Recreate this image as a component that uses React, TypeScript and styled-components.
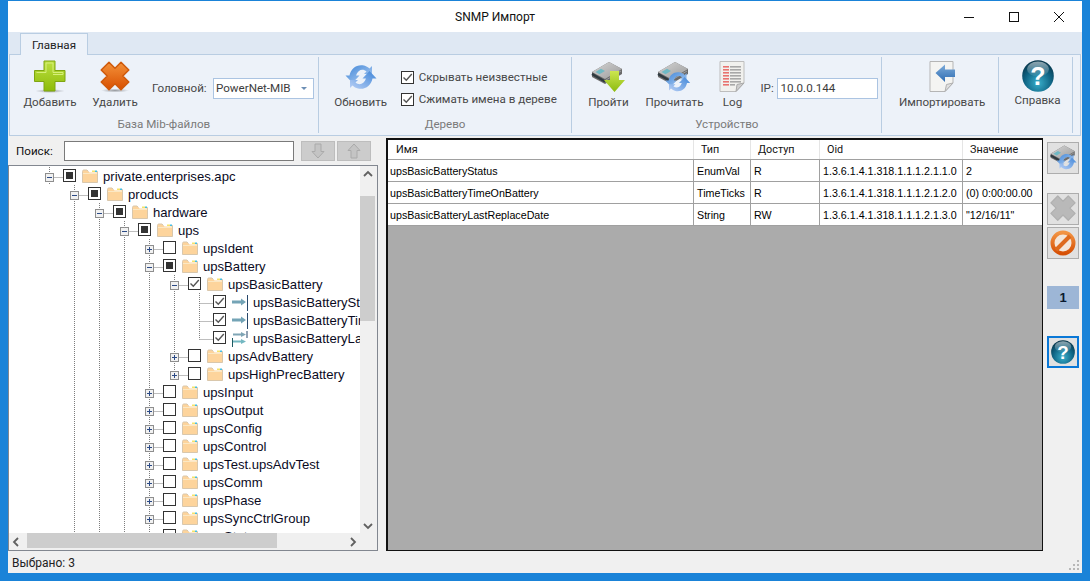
import React from "react";
import styled, { createGlobalStyle } from "styled-components";

const Global = createGlobalStyle`
  html, body { margin: 0; padding: 0; height: 581px; overflow: hidden; background: #1a83d8; }
  #root { height: 581px; }
  * { box-sizing: border-box; }
`;

const UI = `Roboto, "Noto Sans", sans-serif`;
const DATA = `"Liberation Sans", Arial, sans-serif`;

const Win = styled.div`
  margin: 1px 8px 0;
  width: 1074px;
  height: 572px;
  background: #f0f0f0;
  display: flex;
  flex-direction: column;
  font-family: ${UI};
  font-size: 11.6px;
  color: #000;
`;
const TitleBar = styled.div`
  height: 31px;
  background: #fff;
  display: flex;
  align-items: center;
`;
const Title = styled.div`
  flex: 1;
  text-align: center;
  padding-left: 36px;
  color: #111;
  font-size: 12px;
`;
const Controls = styled.div`display: flex; width: 136px;`;
const Ctl = styled.div`
  flex: 1;
  height: 29px;
  display: flex;
  align-items: center;
  justify-content: center;
`;
const TabStrip = styled.div`
  height: 22px;
  background: #dfe8f3;
  padding-left: 12px;
  display: flex;
  align-items: flex-end;
`;
const Tab = styled.div`
  width: 68px;
  height: 22px;
  margin-bottom: -1px;
  position: relative;
  z-index: 1;
  background: #edf2f9;
  border: 1px solid #b9cde2;
  border-bottom: none;
  text-align: center;
  line-height: 22px;
  color: #222;
`;
const Ribbon = styled.div`
  height: 82px;
  margin-left: 1px;
  margin-right: 1px;
  background: #edf2f9;
  border: 1px solid #b9cde2;
  display: flex;
  padding-right: 7px;
`;
const Group = styled.div<{ $w?: number }>`
  width: ${(p) => (p.$w ? `${p.$w}px` : "auto")};
  height: 76px;
  margin-top: 2px;
  border-right: 1px solid #b9cde2;
  display: flex;
  flex-direction: column;
`;
const GroupBody = styled.div<{ $pad?: number; $center?: boolean }>`
  height: 57px;
  display: flex;
  padding-left: ${(p) => p.$pad ?? 0}px;
  justify-content: ${(p) => (p.$center ? "center" : "flex-start")};
`;
const GroupName = styled.div`
  height: 19px;
  padding-top: 2px;
  text-align: center;
  color: #7a7a7a;
  line-height: 17px;
`;
const BigButton = styled.div<{ $w: number }>`
  width: ${(p) => p.$w}px;
  display: flex;
  flex-direction: column;
  align-items: center;
  padding-top: 3px;
  color: #484848;
  white-space: nowrap;
  svg { flex: none; display: block; }
`;
const BigLabel = styled.div`
  line-height: 16px;
`;
const Field = styled.div<{ $ml: number }>`
  display: flex;
  align-items: center;
  margin-left: ${(p) => p.$ml}px;
  margin-top: 20px;
  height: 22px;
  color: #484848;
  white-space: nowrap;
`;
const FieldLabel = styled.span<{ $w: number }>`
  width: ${(p) => p.$w}px;
  display: block;
`;
const BoxInput = styled.div`
  width: 101px;
  height: 21px;
  background: #fff;
  border: 1px solid #abc4e2;
  padding-left: 2px;
  display: flex;
  align-items: center;
  justify-content: space-between;
  color: #3c3c3c;
  overflow: hidden;
`;
const Caret = styled.span`
  width: 0;
  height: 0;
  margin-right: 6px;
  border-left: 3px solid transparent;
  border-right: 3px solid transparent;
  border-top: 3px solid #6d8fb5;
`;
const Checks = styled.div`
  margin-left: 4px;
  padding-top: 13px;
  display: flex;
  flex-direction: column;
  gap: 8px;
`;
const CheckLine = styled.div`
  display: flex;
  align-items: center;
  height: 14px;
  gap: 5px;
  color: #484848;
  white-space: nowrap;
`;
const Box = styled.span<{ $mt?: number }>`
  width: 13px;
  height: 13px;
  flex: none;
  margin-top: ${(p) => p.$mt ?? 0}px;
  background: #fff;
  border: 1px solid #333;
  display: flex;
  align-items: center;
  justify-content: center;
`;
const Mixed = styled.span`
  width: 7px;
  height: 7px;
  background: #333;
`;
const Main = styled.div`
  flex: 1;
  display: flex;
  min-height: 0;
`;
const LeftCol = styled.div`
  width: 370px;
  display: flex;
  flex-direction: column;
`;
const SearchRow = styled.div`
  height: 29px;
  display: flex;
  align-items: flex-start;
  padding: 5px 0 0 8px;
  color: #111;
`;
const SearchLabel = styled.div`
  width: 48px;
  line-height: 20px;
`;
const SearchInput = styled.div`
  width: 230px;
  height: 20px;
  background: #fff;
  border: 1px solid #7a7a7a;
  margin-right: 7px;
`;
const ArrowBtn = styled.div`
  width: 34px;
  height: 20px;
  margin-right: 2px;
  background: #cccccc;
  border: 1px solid #bdbdbd;
  display: flex;
  align-items: center;
  justify-content: center;
`;
const TreePanel = styled.div`
  height: 386px;
  border: 1px solid #828790;
  background: #f0f0f0;
  display: grid;
  grid-template-columns: 351px 15px;
  grid-template-rows: 1fr 15px;
  padding-bottom: 2px;
`;
const TreeView = styled.div`
  background: #fff;
  overflow: hidden;
  padding-top: 1px;
  font-family: ${DATA};
  font-size: 13.1px;
  color: #0a0a1e;
  white-space: nowrap;
`;
const Row = styled.div`
  height: 18px;
  display: flex;
  align-items: flex-start;
`;
const NodeIcon = styled.span`
  margin: 2px 5px 0 6px;
  width: 16px;
  height: 14px;
  flex: none;
  display: block;
  svg { display: block; }
`;
const NodeLabel = styled.span`
  line-height: 20px;
`;
const VBar = styled.div`
  background: #f0f0f0;
  display: flex;
  flex-direction: column;
`;
const HBar = styled.div`
  background: #f0f0f0;
  display: flex;
`;
const BarBtn = styled.div`
  width: 15px;
  height: 15px;
  flex: none;
  display: flex;
  align-items: center;
  justify-content: center;
  color: #606060;
`;
const VThumb = styled.div<{ $before: number; $size: number }>`
  margin-top: ${(p) => p.$before}px;
  height: ${(p) => p.$size}px;
  background: #cdcdcd;
`;
const Spacer = styled.div`flex: 1;`;
const HThumb = styled.div<{ $size: number }>`
  width: ${(p) => p.$size}px;
  margin-left: 3px;
  background: #cdcdcd;
`;
const Corner = styled.div`background: #f0f0f0;`;
const TablePanel = styled.div`
  width: 657px;
  height: 413px;
  margin: 2px 0 0 8px;
  background: #ababab;
  border: 1px solid #111;
  border-width: 2px 1px 1px 2px;
  overflow: hidden;
`;
const Columns = "305px 57px 69px 143px 1fr";
const HeadRow = styled.div`
  display: grid;
  grid-template-columns: ${Columns};
  height: 20px;
  background: #fff;
  border-bottom: 1px solid #a0a0a0;
`;
const HeadCell = styled.div`
  padding-left: 7px;
  line-height: 19px;
  font-size: 10.8px;
  color: #111;
  border-left: 1px solid #e5e5e5;
  &:first-child { border-left: none; padding-left: 8px; }
`;
const BodyRow = styled.div`
  display: grid;
  grid-template-columns: ${Columns};
  height: 22px;
  background: #fff;
  border-bottom: 1px solid #a0a0a0;
`;
const BodyCell = styled.div`
  padding-left: 3px;
  line-height: 22px;
  font-family: ${DATA};
  font-size: 10.7px;
  color: #000;
  white-space: nowrap;
  overflow: hidden;
  border-left: 1px solid #a0a0a0;
  &:first-child { border-left: none; padding-left: 2px; }
`;
const SideBar = styled.div`
  width: 32px;
  margin-left: 4px;
  padding-top: 6px;
  display: flex;
  flex-direction: column;
`;
const SideBtn = styled.div<{ $mt?: number; $focus?: boolean }>`
  width: 32px;
  height: 32px;
  margin-top: ${(p) => p.$mt ?? 0}px;
  background: #e1e1e1;
  border: ${(p) => (p.$focus ? "2px solid #0a78d7" : "1px solid #adadad")};
  display: flex;
  align-items: center;
  justify-content: center;
  svg { display: block; flex: none; }
`;
const Badge = styled.div`
  width: 32px;
  height: 23px;
  margin-top: 27px;
  background: #9db6d6;
  text-align: center;
  line-height: 23px;
  font-family: ${DATA};
  font-weight: bold;
  font-size: 13px;
  color: #0a1a30;
`;
const Status = styled.div`
  height: 22px;
  display: flex;
  align-items: center;
  justify-content: space-between;
  padding: 1px 2px 0 4px;
  font-size: 12px;
  color: #222;
  svg { align-self: flex-end; margin-bottom: 2px; }
`;

/* ---------- icons ---------- */
const PlusIcon = () => (
  <svg width="32" height="34" viewBox="0 0 32 34">
    <defs>
      <linearGradient id="gPlus" x1="0" y1="0" x2="0" y2="1">
        <stop offset="0" stopColor="#bce040" />
        <stop offset="1" stopColor="#8dbb0a" />
      </linearGradient>
      <radialGradient id="gShadow">
        <stop offset="0" stopColor="#000" stopOpacity=".35" />
        <stop offset="1" stopColor="#000" stopOpacity="0" />
      </radialGradient>
    </defs>
    <ellipse cx="16" cy="31" rx="15" ry="2" fill="url(#gShadow)" />
    <path d="M10 1h11v9.500h10v11h-10v9.500h-11v-9.500h-9.500v-11h9.500z" fill="url(#gPlus)" stroke="#7fa512" strokeWidth="1" strokeLinejoin="round" />
    <path d="M12 3h7v9.500h10v2h-10M12 3v9.500h-9.500" fill="none" stroke="#d6ef7a" strokeWidth="1" />
  </svg>
);
const CrossIcon = ({ gray }: { gray?: boolean }) => (
  <svg width={gray ? 28 : 32} height={gray ? 30 : 34} viewBox="0 0 32 34">
    <defs>
      <linearGradient id="gCross" x1="0" y1="0" x2="0" y2="1">
        <stop offset="0" stopColor="#f4923a" />
        <stop offset="1" stopColor="#d84f00" />
      </linearGradient>
    </defs>
    {!gray && <ellipse cx="16" cy="30.500" rx="14" ry="2" fill="url(#gShadow)" />}
    <path
      d="M16 8.200L22 2.200L29.800 10L23.800 16L29.800 22L22 29.800L16 23.800L10 29.800L2.200 22L8.200 16L2.200 10L10 2.200Z"
      fill={gray ? "#b9b9b9" : "url(#gCross)"}
      stroke={gray ? "#b0b0b0" : "#cf5a0c"}
      strokeWidth="1.500"
      strokeLinejoin="round"
    />
  </svg>
);
const RefreshShape = () => (
  <g>
    <defs>
      <linearGradient id="gRefA" x1="0" y1="0" x2="1" y2="1">
        <stop offset="0" stopColor="#3f86d8" />
        <stop offset="1" stopColor="#b4d0f3" />
      </linearGradient>
      <linearGradient id="gRefB" x1="1" y1="0" x2="0" y2="1">
        <stop offset="0" stopColor="#3f86d8" />
        <stop offset="1" stopColor="#b8cff5" />
      </linearGradient>
    </defs>
    <path d="M0.500 14.500L4.500 14.500C6 7 12 3 19 4.500C21 5 23 6 24.500 7.500L27 5L27 13L19 13L21.500 10.500C18 7.500 13 8.500 11 14.500L14.500 14.500L7.500 22Z" fill="url(#gRefA)" />
    <path d="M31.500 17.500L27.500 17.500C26 25 20 29 13 27.500C11 27 9 26 7.500 24.500L5 27L5 19L13 19L10.500 21.500C14 24.500 19 23.500 21 17.500L17.500 17.500L24.500 10Z" fill="url(#gRefB)" />
  </g>
);
const RefreshIcon = () => (
  <svg width="32" height="34" viewBox="0 -1 32 34">
    <RefreshShape />
  </svg>
);
const DeviceShape = () => (
  <g>
    <defs>
      <linearGradient id="gDev" x1="0" y1="0" x2="1" y2="1">
        <stop offset="0" stopColor="#d6d6d6" />
        <stop offset="1" stopColor="#9a9a9a" />
      </linearGradient>
    </defs>
    <path d="M1 11L18 1L31 8L31 13L14 23L1 16Z" fill="#6a6a6a" />
    <path d="M1 11L18 1L31 8L14 18Z" fill="url(#gDev)" />
    <path d="M4.500 11L10 7.800L14 10L8.500 13.200Z" fill="#6fb9c4" />
    <path d="M1 13L14 20.500" stroke="#2f3a40" strokeWidth="2.500" />
    <path d="M15 19L30 10" stroke="#9d9d9d" strokeWidth="1" />
  </g>
);
const WalkIcon = () => (
  <svg width="36" height="34" viewBox="0 0 36 34">
    <defs>
      <linearGradient id="gDown" x1="0" y1="0" x2="0" y2="1">
        <stop offset="0" stopColor="#cde64f" />
        <stop offset="1" stopColor="#8cbb10" />
      </linearGradient>
    </defs>
    <g transform="translate(1 1)"><DeviceShape /></g>
    <path d="M20 11H29V20H35L24.500 32L14 20H20Z" fill="url(#gDown)" />
  </svg>
);
const ReadIcon = ({ size = 36 }: { size?: number }) => (
  <svg width={size} height={(size * 34) / 36} viewBox="0 0 36 34">
    <g transform="translate(1 1)"><DeviceShape /></g>
    <g transform="translate(9 9) scale(.8)"><RefreshShape /></g>
  </svg>
);
const logRows = [6, 9, 12, 15, 18, 21];
const LogIcon = () => (
  <svg width="26" height="34" viewBox="0 0 26 34">
    <path d="M1 1.500H25V23L17 31.500H1Z" fill="#f1f1ee" stroke="#bdbdbd" />
    <path d="M17 31.500L18 24.500L25 23Z" fill="#cfcfcf" stroke="#a9a9a9" />
    {logRows.map((y) => (
      <g key={y}>
        <rect x="4" y={y} width="6" height="1.600" fill="#e8736f" />
        <rect x="11" y={y} width="11" height="1.600" fill="#a8a8a8" />
      </g>
    ))}
    <rect x="4" y="24" width="6" height="1.600" fill="#e8736f" />
    <rect x="11" y="24" width="5" height="1.600" fill="#a8a8a8" />
  </svg>
);
const ImportIcon = () => (
  <svg width="32" height="34" viewBox="0 0 32 34">
    <defs>
      <linearGradient id="gImp" x1="0" y1="0" x2="0" y2="1">
        <stop offset="0" stopColor="#7dabd9" />
        <stop offset="1" stopColor="#2e6cb2" />
      </linearGradient>
    </defs>
    <path d="M4 1.500H27V23L19 31.500H4Z" fill="#f4f4f2" stroke="#b5b5b5" />
    <path d="M19 31.500L20.500 24.500L27 23Z" fill="#e0e0e0" stroke="#b0b0b0" />
    <path d="M9.500 13L19 4.500V9.500H29V17H19V22Z" fill="url(#gImp)" />
  </svg>
);
const HelpIcon = ({ size = 32 }: { size?: number }) => (
  <svg width={size} height={size} viewBox="0 0 32 32">
    <defs>
      <radialGradient id="gHelp" cx=".5" cy=".72" r=".7">
        <stop offset="0" stopColor="#3ab0cc" />
        <stop offset=".6" stopColor="#0f6585" />
        <stop offset="1" stopColor="#07354a" />
      </radialGradient>
      <linearGradient id="gGloss" x1="0" y1="0" x2="0" y2="1">
        <stop offset="0" stopColor="#fff" stopOpacity=".55" />
        <stop offset="1" stopColor="#fff" stopOpacity=".05" />
      </linearGradient>
    </defs>
    <circle cx="16" cy="16" r="15.800" fill="url(#gHelp)" />
    <ellipse cx="16" cy="9" rx="11" ry="7.500" fill="url(#gGloss)" />
    <text x="16" y="25" textAnchor="middle" fontFamily="Liberation Sans, sans-serif" fontWeight="bold" fontSize="25" fill="#fff">?</text>
  </svg>
);
const FolderIcon = () => (
  <svg width="16" height="14" viewBox="0 0 16 14">
    <path d="M0.500 2.500C0.500 1.500 1 1 2 1H5L6.500 2.500H15.500V13.500H0.500Z" fill="#fdd49c" stroke="#d9c7ac" />
    <path d="M6 1.500H14.500V3.500H7.500Z" fill="#fff" />
    <path d="M10 1.500H13V3H10Z" fill="#f4e36a" />
    <rect x="13" y="1.500" width="2" height="1.500" fill="#45bde6" />
    <rect x="1" y="4" width="14" height="1" fill="#fbe8c4" />
  </svg>
);
const LeafIcon = ({ rw }: { rw?: boolean }) => (
  <svg width="16" height="16" viewBox="0 0 16 16">
    {rw ? (
      <>
        <rect x="14.500" y="0" width="1" height="7" fill="#27476a" />
        <path d="M1 2.500H9V1L14 3.500L9 6V4.500H1Z" fill="#7fa5b5" />
        <rect x="0" y="7" width="1" height="9" fill="#1d5a62" />
        <path d="M1 9.500H9V8L14 10.500L9 13V11.500H1Z" fill="#74b8c2" />
      </>
    ) : (
      <>
        <rect x="15" y="-1" width="1" height="17" fill="#27476a" />
        <path d="M0 5.500H9V3.500L14 7L9 10.500V8.500H0Z" fill="#74a4b6" />
      </>
    )}
  </svg>
);
const Check = () => (
  <svg width="11" height="11" viewBox="0 0 11 11">
    <path d="M1.500 5.500L4.300 8.300L9.800 2" fill="none" stroke="#555" strokeWidth="1.400" />
  </svg>
);
const ThickArrow = ({ up }: { up?: boolean }) => (
  <svg width="14" height="16" viewBox="0 0 14 16">
    <path
      d={up ? "M7 1L13 7.500H10V15H4V7.500H1Z" : "M7 15L13 8.500H10V1H4V8.500H1Z"}
      fill="#c4c4c4"
      stroke="#aaaaaa"
    />
  </svg>
);
const Chevron = ({ dir }: { dir: "up" | "down" | "left" | "right" }) => {
  const d = { up: "M1 6L5 2L9 6", down: "M1 2L5 6L9 2", left: "M6 1L2 5L6 9", right: "M3 1L7 5L3 9" }[dir];
  return (
    <svg width="10" height="10" viewBox="0 0 10 8" overflow="visible">
      <path d={d} fill="none" stroke="#606060" strokeWidth="1.800" />
    </svg>
  );
};
const NoEntry = () => (
  <svg width="26" height="26" viewBox="0 0 26 26">
    <defs>
      <linearGradient id="gNo" x1="0" y1="0" x2="0" y2="1">
        <stop offset="0" stopColor="#f29444" />
        <stop offset="1" stopColor="#d64f04" />
      </linearGradient>
    </defs>
    <circle cx="13" cy="13" r="10.500" fill="#f3e6da" stroke="url(#gNo)" strokeWidth="4" />
    <path d="M6 20L20 6" stroke="#de6a1e" strokeWidth="4" />
  </svg>
);

/* ---------- tree ---------- */
type Node = {
  level: number;
  exp?: "+" | "-";
  state: "none" | "mixed" | "checked";
  kind?: "ro" | "rw";
  last?: boolean;
  label: string;
};
const nodes: Node[] = [
  { level: 0, exp: "-", state: "mixed", label: "private.enterprises.apc" },
  { level: 1, exp: "-", state: "mixed", label: "products" },
  { level: 2, exp: "-", state: "mixed", label: "hardware" },
  { level: 3, exp: "-", state: "mixed", label: "ups" },
  { level: 4, exp: "+", state: "none", label: "upsIdent" },
  { level: 4, exp: "-", state: "mixed", label: "upsBattery" },
  { level: 5, exp: "-", state: "checked", label: "upsBasicBattery" },
  { level: 6, state: "checked", kind: "ro", label: "upsBasicBatteryStatus" },
  { level: 6, state: "checked", kind: "ro", label: "upsBasicBatteryTimeOnBattery" },
  { level: 6, state: "checked", kind: "rw", last: true, label: "upsBasicBatteryLastReplaceDate" },
  { level: 5, exp: "+", state: "none", label: "upsAdvBattery" },
  { level: 5, exp: "+", state: "none", last: true, label: "upsHighPrecBattery" },
  { level: 4, exp: "+", state: "none", label: "upsInput" },
  { level: 4, exp: "+", state: "none", label: "upsOutput" },
  { level: 4, exp: "+", state: "none", label: "upsConfig" },
  { level: 4, exp: "+", state: "none", label: "upsControl" },
  { level: 4, exp: "+", state: "none", label: "upsTest.upsAdvTest" },
  { level: 4, exp: "+", state: "none", label: "upsComm" },
  { level: 4, exp: "+", state: "none", label: "upsPhase" },
  { level: 4, exp: "+", state: "none", label: "upsSyncCtrlGroup" },
  { level: 4, exp: "+", state: "none", label: "upsState" },
];

const Guides = ({ node }: { node: Node }) => {
  const own = 40.5 + 25 * node.level;
  const width = 54 + 25 * node.level;
  const through: number[] = [];
  for (let l = 1; l < node.level; l++) {
    if (l === 5 && node.level === 6) through.push(l);
    else if (l <= 4) through.push(l);
  }
  const dots = { stroke: "#7d7d7d", strokeDasharray: "1 1", strokeWidth: 1 };
  return (
    <svg width={width} height="18" viewBox={`0 0 ${width} 18`} style={{ flex: "none", display: "block" }}>
      {through.map((l) => (
        <line key={l} x1={40.5 + 25 * l} x2={40.5 + 25 * l} y1="0" y2="18" {...dots} />
      ))}
      <line x1={own} x2={own} y1="0" y2={node.last ? 10.5 : 18} {...dots} />
      <line x1={own} x2={width} y1="10.500" y2="10.500" {...dots} />
      {node.exp && (
        <g>
          <rect x={own - 4} y="6.500" width="8" height="8" fill="#f1f1f1" stroke="#8e8e8e" />
          <rect x={own - 2.5} y="10" width="5" height="1" fill="#2b4a86" />
          {node.exp === "+" && <rect x={own - 0.5} y="8" width="1" height="5" fill="#2b4a86" />}
        </g>
      )}
    </svg>
  );
};

const TreeRow = ({ node }: { node: Node }) => (
  <Row>
    <Guides node={node} />
    <Box $mt={2}>
      {node.state === "mixed" && <Mixed />}
      {node.state === "checked" && <Check />}
    </Box>
    <NodeIcon>
      {node.kind ? <LeafIcon rw={node.kind === "rw"} /> : <FolderIcon />}
    </NodeIcon>
    <NodeLabel>{node.label}</NodeLabel>
  </Row>
);

const records = [
  ["upsBasicBatteryStatus", "EnumVal", "R", "1.3.6.1.4.1.318.1.1.1.2.1.1.0", "2"],
  ["upsBasicBatteryTimeOnBattery", "TimeTicks", "R", "1.3.6.1.4.1.318.1.1.1.2.1.2.0", "(0) 0:00:00.00"],
  ["upsBasicBatteryLastReplaceDate", "String", "RW", "1.3.6.1.4.1.318.1.1.1.2.1.3.0", '"12/16/11"'],
];

export default function App() {
  return (
    <>
      <Global />
      <Win>
        <TitleBar>
          <Title>SNMP Импорт</Title>
          <Controls>
            <Ctl>
              <svg width="10" height="10" viewBox="0 0 10 10"><path d="M0 5.500H10" stroke="#111" /></svg>
            </Ctl>
            <Ctl>
              <svg width="10" height="10" viewBox="0 0 10 10"><rect x=".5" y=".5" width="9" height="9" fill="none" stroke="#111" /></svg>
            </Ctl>
            <Ctl>
              <svg width="10" height="10" viewBox="0 0 10 10"><path d="M0 0L10 10M10 0L0 10" stroke="#111" /></svg>
            </Ctl>
          </Controls>
        </TitleBar>
        <TabStrip>
          <Tab>Главная</Tab>
        </TabStrip>
        <Ribbon>
          <Group $w={309}>
            <GroupBody $pad={7}>
              <BigButton $w={66}><PlusIcon /><BigLabel>Добавить</BigLabel></BigButton>
              <BigButton $w={64}><CrossIcon /><BigLabel>Удалить</BigLabel></BigButton>
              <Field $ml={5}>
                <FieldLabel $w={61}>Головной:</FieldLabel>
                <BoxInput>PowerNet-MIB<Caret /></BoxInput>
              </Field>
            </GroupBody>
            <GroupName>База Mib-файлов</GroupName>
          </Group>
          <Group $w={254}>
            <GroupBody $pad={6}>
              <BigButton $w={72}><RefreshIcon /><BigLabel>Обновить</BigLabel></BigButton>
              <Checks>
                <CheckLine><Box><Check /></Box>Скрывать неизвестные</CheckLine>
                <CheckLine><Box><Check /></Box>Сжимать имена в дереве</CheckLine>
              </Checks>
            </GroupBody>
            <GroupName>Дерево</GroupName>
          </Group>
          <Group $w={310}>
            <GroupBody $pad={6}>
              <BigButton $w={60}><WalkIcon /><BigLabel>Пройти</BigLabel></BigButton>
              <BigButton $w={72}><ReadIcon /><BigLabel>Прочитать</BigLabel></BigButton>
              <BigButton $w={44}><LogIcon /><BigLabel>Log</BigLabel></BigButton>
              <Field $ml={6}>
                <FieldLabel $w={17}>IP:</FieldLabel>
                <BoxInput>10.0.0.144</BoxInput>
              </Field>
            </GroupBody>
            <GroupName>Устройство</GroupName>
          </Group>
          <Group $w={117}>
            <GroupBody $center $pad={4}>
              <BigButton $w={100}><ImportIcon /><BigLabel>Импортировать</BigLabel></BigButton>
            </GroupBody>
          </Group>
          <Group $w={74}>
            <GroupBody $center $pad={4}>
              <BigButton $w={60}><HelpIcon /><BigLabel>Справка</BigLabel></BigButton>
            </GroupBody>
          </Group>
        </Ribbon>
        <Main>
          <LeftCol>
            <SearchRow>
              <SearchLabel>Поиск:</SearchLabel>
              <SearchInput />
              <ArrowBtn><ThickArrow /></ArrowBtn>
              <ArrowBtn><ThickArrow up /></ArrowBtn>
            </SearchRow>
            <TreePanel>
              <TreeView>
                {nodes.map((n) => <TreeRow key={n.label} node={n} />)}
              </TreeView>
              <VBar>
                <BarBtn><Chevron dir="up" /></BarBtn>
                <VThumb $before={15} $size={125} />
                <Spacer />
                <BarBtn><Chevron dir="down" /></BarBtn>
              </VBar>
              <HBar>
                <BarBtn><Chevron dir="left" /></BarBtn>
                <HThumb $size={250} />
                <Spacer />
                <BarBtn><Chevron dir="right" /></BarBtn>
              </HBar>
              <Corner />
            </TreePanel>
          </LeftCol>
          <TablePanel>
            <HeadRow>
              <HeadCell>Имя</HeadCell>
              <HeadCell>Тип</HeadCell>
              <HeadCell>Доступ</HeadCell>
              <HeadCell>Oid</HeadCell>
              <HeadCell>Значение</HeadCell>
            </HeadRow>
            {records.map((r) => (
              <BodyRow key={r[0]}>
                {r.map((c) => <BodyCell key={c}>{c}</BodyCell>)}
              </BodyRow>
            ))}
          </TablePanel>
          <SideBar>
            <SideBtn><ReadIcon size={29} /></SideBtn>
            <SideBtn $mt={19}><CrossIcon gray /></SideBtn>
            <SideBtn $mt={2}><NoEntry /></SideBtn>
            <Badge>1</Badge>
            <SideBtn $mt={27} $focus><HelpIcon size={24} /></SideBtn>
          </SideBar>
        </Main>
        <Status>
          Выбрано: 3
          <svg width="12" height="12" viewBox="0 0 12 12">
            {[[9, 9], [9, 5], [9, 1], [5, 9], [5, 5], [1, 9]].map(([x, y]) => (
              <rect key={`${x}-${y}`} x={x} y={y} width="2" height="2" fill="#b8b8b8" />
            ))}
          </svg>
        </Status>
      </Win>
    </>
  );
}
